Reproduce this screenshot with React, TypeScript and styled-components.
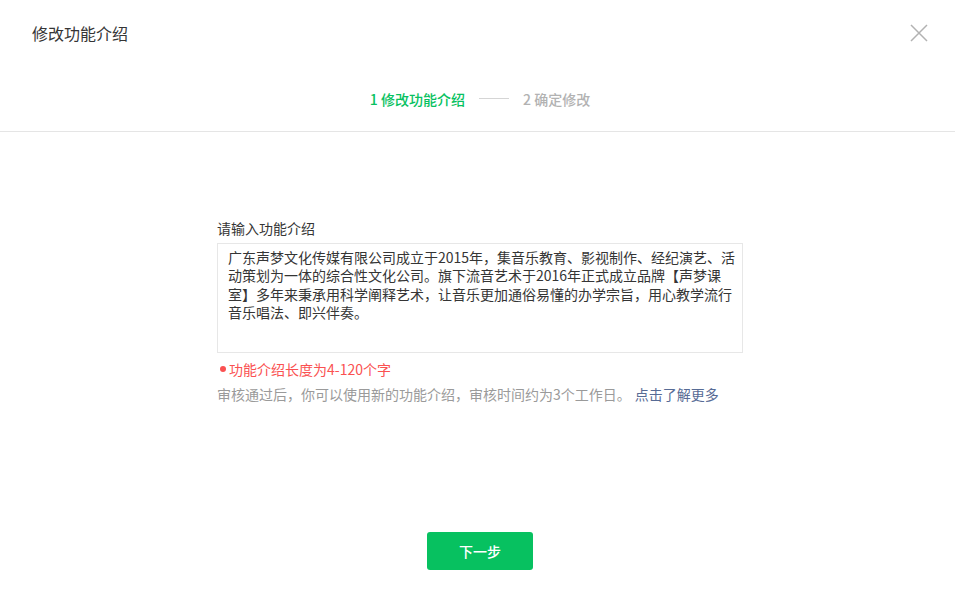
import React from "react";
import styled, { createGlobalStyle } from "styled-components";

const Global = createGlobalStyle`
  html, body { margin: 0; padding: 0; background: #fff; }
  body { font-family: "Noto Sans CJK SC", "Noto Sans", sans-serif; color: #353535; }
  * { box-sizing: border-box; }
`;

const Page = styled.div`
  width: 955px;
  height: 596px;
  display: flex;
  flex-direction: column;
  background: #fff;
`;

const Header = styled.div`
  height: 66px;
  padding: 0 27px 0 32px;
  display: flex;
  align-items: center;
  justify-content: space-between;
`;

const Title = styled.h1`
  margin: 0;
  font-size: 16px;
  font-weight: 400;
  line-height: 22px;
  color: #353535;
`;

const CloseButton = styled.button`
  width: 18px;
  height: 18px;
  padding: 0;
  border: none;
  background: none;
  cursor: pointer;
  display: flex;
`;

const Steps = styled.div`
  height: 66px;
  border-bottom: 1px solid #e5e5e5;
  padding-left: 5px;
  display: flex;
  align-items: center;
  justify-content: center;
  gap: 14px;
`;

const Step = styled.span<{ $active?: boolean }>`
  font-size: 14px;
  line-height: 20px;
  font-weight: 500;
  color: ${(p) => (p.$active ? "#07c160" : "#b2b2b2")};
  white-space: pre;
`;

const StepLine = styled.span`
  width: 30px;
  height: 1px;
  background: #d5d5d5;
`;

const Body = styled.div`
  flex: 1;
  padding: 86px 0 0 5px;
  display: flex;
  justify-content: center;
`;

const Form = styled.div`
  width: 526px;
  display: flex;
  flex-direction: column;
`;

const Label = styled.label`
  font-size: 14px;
  line-height: 20px;
  color: #353535;
  margin-bottom: 5px;
`;

const TextBox = styled.div`
  height: 110px;
  border: 1px solid #e7e7e7;
  padding: 4px 2px 4px 10px;
  font-size: 14px;
  line-height: 18.4px;
  color: #353535;
`;

const ErrorTip = styled.div`
  margin-top: 6px;
  display: flex;
  align-items: center;
  font-size: 14px;
  line-height: 20px;
  color: #fa5151;
`;

const Dot = styled.span`
  width: 6px;
  height: 6px;
  border-radius: 50%;
  background: #fa5151;
  margin: 0 3px 0 3px;
`;

const Hint = styled.div`
  margin-top: 5px;
  font-size: 14px;
  line-height: 20px;
  color: #9a9a9a;
`;

const Link = styled.a`
  color: #576b95;
  text-decoration: none;
  margin-left: 4px;
`;

const Footer = styled.div`
  padding: 0 0 26px 5px;
  display: flex;
  justify-content: center;
`;

const PrimaryButton = styled.button`
  width: 106px;
  height: 38px;
  border: none;
  border-radius: 3px;
  background: #07c160;
  color: #fff;
  font-family: inherit;
  font-size: 14px;
  font-weight: 500;
  cursor: pointer;
`;

export default function App() {
  return (
    <Page>
      <Global />
      <Header>
        <Title>修改功能介绍</Title>
        <CloseButton aria-label="关闭">
          <svg width="18" height="18" viewBox="0 0 18 18">
            <path d="M1 1 L17 17 M17 1 L1 17" stroke="#b2b2b2" strokeWidth="1.5" fill="none" />
          </svg>
        </CloseButton>
      </Header>
      <Steps>
        <Step $active>1 修改功能介绍</Step>
        <StepLine />
        <Step>2 确定修改</Step>
      </Steps>
      <Body>
        <Form>
          <Label>请输入功能介绍</Label>
          <TextBox>
            广东声梦文化传媒有限公司成立于2015年，集音乐教育、影视制作、经纪演艺、活动策划为一体的综合性文化公司。旗下流音艺术于2016年正式成立品牌【声梦课
            <br />
            室】多年来秉承用科学阐释艺术，让音乐更加通俗易懂的办学宗旨，用心教学流行音乐唱法、即兴伴奏。
          </TextBox>
          <ErrorTip>
            <Dot />
            功能介绍长度为4-120个字
          </ErrorTip>
          <Hint>
            审核通过后，你可以使用新的功能介绍，审核时间约为3个工作日。
            <Link href="#">点击了解更多</Link>
          </Hint>
        </Form>
      </Body>
      <Footer>
        <PrimaryButton>下一步</PrimaryButton>
      </Footer>
    </Page>
  );
}
